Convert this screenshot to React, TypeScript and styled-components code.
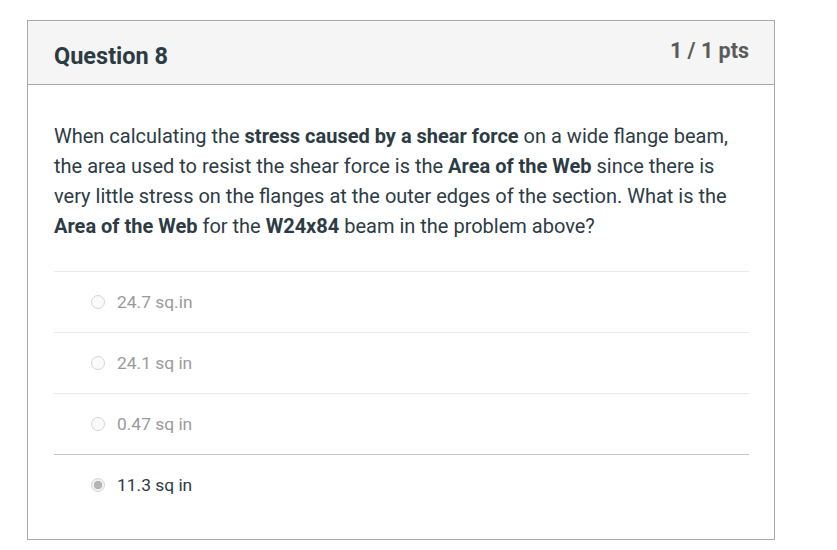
import styled, { createGlobalStyle } from "styled-components";

const GlobalStyle = createGlobalStyle`
  body {
    margin: 0;
    background: #fff;
    font-family: Roboto, "Liberation Sans", sans-serif;
  }
`;

const answers = [
  { text: "24.7 sq.in", selected: false },
  { text: "24.1 sq in", selected: false },
  { text: "0.47 sq in", selected: false },
  { text: "11.3 sq in", selected: true },
];

export default function App() {
  return (
    <>
      <GlobalStyle />
      <Card>
        <Header>
          <Title>Question 8</Title>
          <Points>1 / 1 pts</Points>
        </Header>
        <Body>
          <QuestionText>
            When calculating the <b>stress caused by a shear force</b> on a
            wide flange beam, the area used to resist the shear force is the{" "}
            <b>Area of the Web</b> since there is very little stress on the
            flanges at the outer edges of the section. What is the{" "}
            <b>Area of the Web</b> for the <b>W24x84</b> beam in the problem
            above?
          </QuestionText>
          <AnswerList>
            {answers.map((a) => (
              <Answer key={a.text} $selected={a.selected}>
                <Radio $selected={a.selected} />
                <AnswerText $selected={a.selected}>{a.text}</AnswerText>
              </Answer>
            ))}
          </AnswerList>
        </Body>
      </Card>
    </>
  );
}

const Card = styled.div`
  width: 746px;
  margin: 20px 0 0 27px;
  border: 1px solid #a9a9a9;
  background: #fff;
`;

const Header = styled.div`
  height: 63px;
  display: flex;
  justify-content: space-between;
  align-items: center;
  padding: 0 25px 0 26px;
  background: #f5f5f5;
  border-bottom: 1px solid #a9a9a9;
`;

const Title = styled.h2`
  margin: 0;
  font-size: 23.5px;
  font-weight: 700;
  color: #2d3b45;
  padding-top: 6px;
`;

const Points = styled.div`
  font-size: 21.5px;
  font-weight: 700;
  color: #5b5b5b;
  padding-bottom: 4px;
`;

const Body = styled.div`
  padding: 36px 25px 24px 26px;
`;

const QuestionText = styled.p`
  margin: 0 0 30px;
  font-size: 20px;
  line-height: 30px;
  color: #2d3b45;
  b {
    font-weight: 700;
  }
`;

const AnswerList = styled.div`
  display: flex;
  flex-direction: column;
`;

const Answer = styled.div<{ $selected: boolean }>`
  height: 61px;
  display: flex;
  align-items: center;
  gap: 12px;
  padding: 0 0 0 37px;
  box-sizing: border-box;
  border-top: 1px solid ${(p) => (p.$selected ? "#c4c4c4" : "#ebebeb")};
`;

const Radio = styled.span<{ $selected: boolean }>`
  width: 14px;
  height: 14px;
  box-sizing: border-box;
  border-radius: 50%;
  border: 1px solid #d5d5d5;
  background: ${(p) =>
    p.$selected
      ? "radial-gradient(circle, #b5b5b5 0 4px, #f2f2f2 4.5px)"
      : "#fafafa"};
`;

const AnswerText = styled.span<{ $selected: boolean }>`
  font-size: 17.4px;
  color: ${(p) => (p.$selected ? "#2d3b45" : "#9a9a9a")};
`;
